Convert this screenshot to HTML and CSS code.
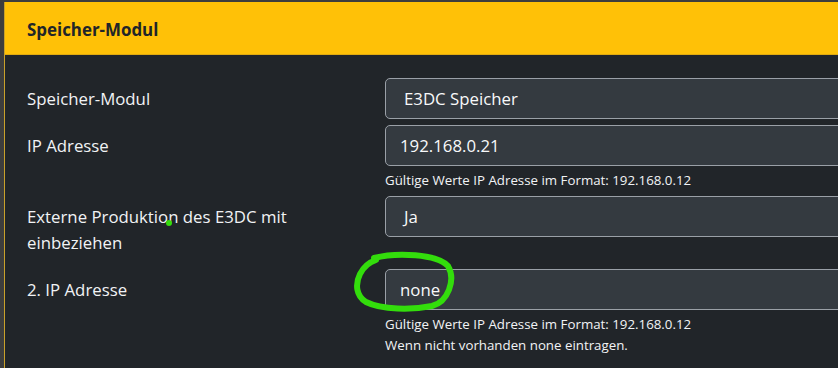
FILE: index.html
```html
<!DOCTYPE html>
<html lang="de">
<head>
    <meta charset="UTF-8">
    <title>Speicher-Modul</title>
    <link rel="stylesheet" href="styles.css">
</head>
<body>
    <div class="card">
        <div class="card-header">Speicher-Modul</div>
        <div class="card-body">
            <div class="form-row">
                <label class="col-label">Speicher-Modul</label>
                <div class="col-field">
                    <div class="select">E3DC Speicher</div>
                </div>
            </div>
            <div class="form-row">
                <label class="col-label">IP Adresse</label>
                <div class="col-field">
                    <div class="input">192.168.0.21</div>
                    <small class="help">Gültige Werte IP Adresse im Format: 192.168.0.12</small>
                </div>
            </div>
            <div class="form-row">
                <label class="col-label">Externe Produktion des E3DC mit einbeziehen</label>
                <div class="col-field">
                    <div class="select">Ja</div>
                </div>
            </div>
            <div class="form-row">
                <label class="col-label">2. IP Adresse</label>
                <div class="col-field">
                    <div class="input">none</div>
                    <small class="help">Gültige Werte IP Adresse im Format: 192.168.0.12<br>Wenn nicht vorhanden none eintragen.</small>
                </div>
            </div>
        </div>
    </div>

    <!-- hand-drawn markers from the screenshot -->
    <span class="dot"></span>
    <svg class="circle" width="110" height="66" viewBox="0 0 110 66">
        <path d="M22 8 C45 2 85 4 96 16 C104 30 96 52 80 56 C60 60 30 60 14 52 C4 46 3 34 8 24 C12 16 18 12 24 10"
              fill="none" stroke="#33dd0c" stroke-width="6" stroke-linecap="round"/>
    </svg>
</body>
</html>
```

FILE: styles.css
```css
body { margin: 0; background: #3d3d3d; font-family: "Open Sans", "Noto Sans", sans-serif; overflow: hidden; height: 368px; position: relative; }
.card { margin: 2px 0 0 4px; width: 1200px; border-left: 1px solid #c9a12a; background: #212529; height: 366px; }
.card-header { background: #ffc107; color: #212529; font-weight: bold; font-size: 16.9px; height: 52px; line-height: 56px; padding-left: 22px; border-bottom: 1px solid #e0aa10; }
.card-body { padding: 23px 0 0 22px; color: #f1f3f5; }
.form-row { display: grid; grid-template-columns: 358px 700px; margin-bottom: 5px; font-size: 16.8px; }
.col-label { padding: 8px 0; line-height: 26px; padding-right: 70px; }
.select, .input { height: 39px; line-height: 39px; border: 1px solid #9aa0a7; border-radius: 5px; background: #343a40; color: #f8f9fa; }
.select { padding-left: 18px; }
.input { padding-left: 14px; }
.help { display: block; font-size: 13.3px; line-height: 21px; margin-top: 4px; color: #f1f3f5; }
.dot { position: absolute; left: 166px; top: 220px; width: 6px; height: 6px; border-radius: 50%; background: #33dd0c; }
.circle { position: absolute; left: 352px; top: 250px; }
```
